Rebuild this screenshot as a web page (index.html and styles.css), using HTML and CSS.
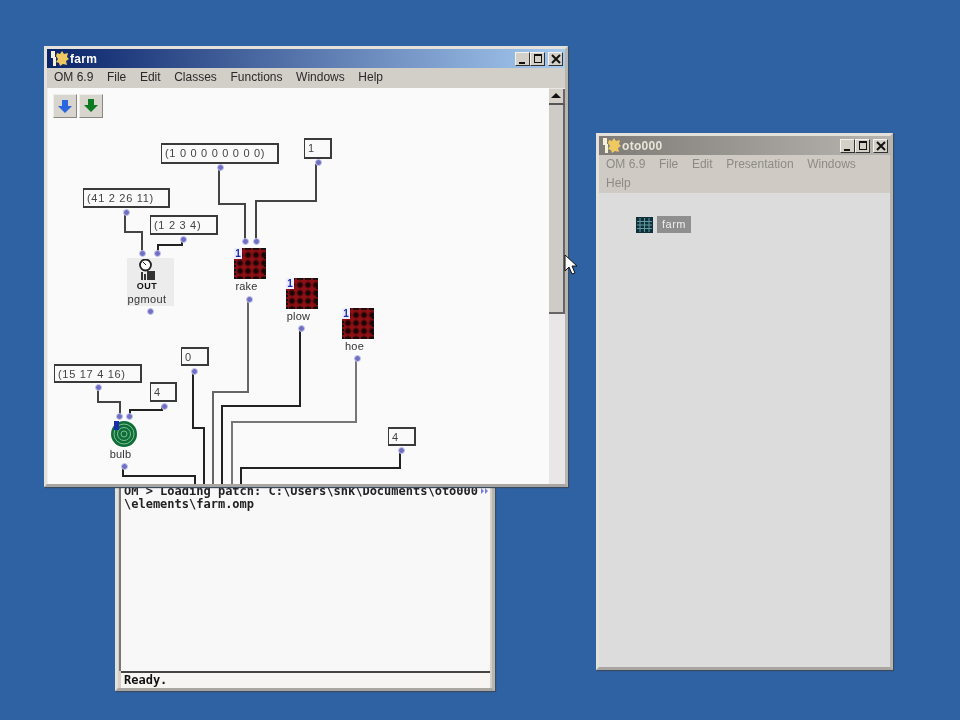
FILE: index.html
```html
<!DOCTYPE html>
<html lang="en">

<head>
  <meta charset="UTF-8">
  <title>farm</title>
  <link rel="stylesheet" href="styles.css">
</head>

<body>
  <div class="desktop">

    <!-- listener window, sits behind farm -->
    <div class="window listener">
      <div class="listener-text">
        <div class="listener-line">OM &gt; Loading patch: C:\Users\shk\Documents\oto000</div>
        <div class="listener-line">\elements\farm.omp</div>
        <svg class="more-mark" width="8" height="8" viewBox="0 0 8 8"><path d="M0 1l3 3-3 3zM4 1l3 3-3 3z" fill="#7a7ae0"/></svg>
      </div>
      <div class="status-bar">Ready.</div>
    </div>

    <!-- workspace window, inactive -->
    <div class="window workspace">
      <div class="titlebar inactive">
        <svg class="app-icon" width="20" height="17" viewBox="0 0 20 17">
          <path d="M2 1h4v6h1v9H4V8H2z" fill="#f6f0d8"/>
          <path d="M8 3l3 1 2-3 2 3 4-1-1 4 2 2-3 2 1 4-4-1-3 2-1-3-3-1 2-3-2-3z" fill="#f0c860"/>
        </svg>
        <span class="title-text">oto000</span>
        <div class="title-buttons">
          <div class="title-btn"><svg width="12" height="12" viewBox="0 0 12 12"><path d="M2 9h6v2H2z" fill="#111"/></svg></div>
          <div class="title-btn"><svg width="12" height="12" viewBox="0 0 12 12"><path d="M2 1h8v9H2zM3 3v6h6V3z" fill="#111" fill-rule="evenodd"/></svg></div>
          <div class="title-btn close"><svg width="12" height="12" viewBox="0 0 12 12"><path d="M2 2l8 8M10 2l-8 8" stroke="#111" stroke-width="2"/></svg></div>
        </div>
      </div>
      <div class="menubar">
        <span>OM 6.9</span><span>File</span><span>Edit</span><span>Presentation</span><span>Windows</span><span>Help</span>
      </div>
      <div class="workspace-body">
        <div class="file-item">
          <svg width="17" height="16" viewBox="0 0 17 16">
            <rect width="17" height="16" fill="#0f3038"/>
            <path d="M4 1v14M8.500 1v14M13 1v14M1 4.500h15M1 8h15M1 11.500h15" stroke="#5f9aa2" stroke-width="1"/>
          </svg>
          <span class="file-label">farm</span>
        </div>
      </div>
    </div>

    <!-- patch window, active -->
    <div class="window farm">
      <div class="titlebar">
        <svg class="app-icon" width="20" height="17" viewBox="0 0 20 17">
          <path d="M2 1h4v6h1v9H4V8H2z" fill="#f6f0d8"/>
          <path d="M8 3l3 1 2-3 2 3 4-1-1 4 2 2-3 2 1 4-4-1-3 2-1-3-3-1 2-3-2-3z" fill="#f0c860"/>
        </svg>
        <span class="title-text">farm</span>
        <div class="title-buttons">
          <div class="title-btn"><svg width="12" height="12" viewBox="0 0 12 12"><path d="M2 9h6v2H2z" fill="#111"/></svg></div>
          <div class="title-btn"><svg width="12" height="12" viewBox="0 0 12 12"><path d="M2 1h8v9H2zM3 3v6h6V3z" fill="#111" fill-rule="evenodd"/></svg></div>
          <div class="title-btn close"><svg width="12" height="12" viewBox="0 0 12 12"><path d="M2 2l8 8M10 2l-8 8" stroke="#111" stroke-width="2"/></svg></div>
        </div>
      </div>
      <div class="menubar">
        <span>OM 6.9</span><span>File</span><span>Edit</span><span>Classes</span><span>Functions</span><span>Windows</span><span>Help</span>
      </div>
      <div class="patch-area">
        <div class="canvas">
          <div class="tool-buttons">
            <div class="tool-btn"><svg width="18" height="18" viewBox="0 0 18 18"><path d="M6 3h6v6h4l-7 7-7-7h4z" fill="#2a66e0"/></svg></div>
            <div class="tool-btn"><svg width="18" height="18" viewBox="0 0 18 18"><path d="M6 2h6v6h4l-7 7-7-7h4z" fill="#0c7a1e"/></svg></div>
          </div>

          <svg class="wires" width="501" height="396" viewBox="48 88 501 396">
            <g fill="none" stroke="#444" stroke-width="2">
              <path d="M219 168V204H245V240"/>
              <path d="M316 164V201H256V240"/>
              <path d="M125 212V232H142V252"/>
              <path d="M182 239V245H158V252" stroke="#222"/>
              <path d="M98 387V402H120V416"/>
              <path d="M162 406V410H130V416" stroke="#222"/>
              <path d="M193 371V428H204V484" stroke="#222"/>
              <path d="M248 299V392H213V484" stroke="#666"/>
              <path d="M300 328V406H222V484" stroke="#222"/>
              <path d="M356 358V422H232V484" stroke="#777"/>
              <path d="M400 450V468H241V484" stroke="#222"/>
              <path d="M123 466V476H195V484" stroke="#222"/>
            </g>
          </svg>

          <div class="value-box box-a">(1 0 0 0 0 0 0 0 0)</div>
          <div class="value-box box-b">1</div>
          <div class="value-box box-c">(41 2 26 11)</div>
          <div class="value-box box-d">(1 2 3 4)</div>
          <div class="value-box box-e">(15 17 4 16)</div>
          <div class="value-box box-f">4</div>
          <div class="value-box box-g">0</div>
          <div class="value-box box-h">4</div>

          <div class="port p1"></div>
          <div class="port p2"></div>
          <div class="port p3"></div>
          <div class="port p4"></div>
          <div class="port p5"></div>
          <div class="port p6"></div>
          <div class="port p7"></div>
          <div class="port p8"></div>
          <div class="port p9"></div>
          <div class="port p10"></div>
          <div class="port p11"></div>
          <div class="port p12"></div>
          <div class="port p13"></div>
          <div class="port p14"></div>
          <div class="port p15"></div>
          <div class="port p16"></div>
          <div class="port p17"></div>
          <div class="port p18"></div>
          <div class="port p19"></div>

          <div class="box-node pgmout">
            <svg width="30" height="34" viewBox="0 0 30 34">
              <circle cx="13.500" cy="6" r="5.500" fill="#fff" stroke="#222" stroke-width="1.800"/>
              <path d="M11 3l3 3" stroke="#222"/>
              <path d="M9 13h2v8H9zM12 15h2v6h-2zM15 12h8v9h-8z" fill="#333"/>
              <text class="out-text" x="15" y="30" text-anchor="middle">OUT</text>
            </svg>
            <span>pgmout</span>
          </div>

          <div class="box-node rake">
            <div class="chip"><span class="chip-num">1</span></div>
            <span>rake</span>
          </div>
          <div class="box-node plow">
            <div class="chip"><span class="chip-num">1</span></div>
            <span>plow</span>
          </div>
          <div class="box-node hoe">
            <div class="chip"><span class="chip-num">1</span></div>
            <span>hoe</span>
          </div>

          <div class="box-node bulb">
            <svg width="26" height="26" viewBox="0 0 26 26">
              <circle cx="13" cy="13" r="13" fill="#0f6e38"/>
              <g fill="none" stroke="#7cc090" stroke-width="1">
                <circle cx="13" cy="13" r="10"/>
                <circle cx="13" cy="13" r="6.500"/>
                <circle cx="13" cy="13" r="3"/>
              </g>
              <rect x="3" y="0" width="5" height="9" fill="#1a2cb0"/>
            </svg>
            <span>bulb</span>
          </div>
        </div>

        <div class="scrollbar">
          <div class="scroll-arrow"><svg width="10" height="6" viewBox="0 0 10 6"><path d="M5 0l5 5H0z" fill="#111"/></svg></div>
          <div class="scroll-thumb"></div>
        </div>
      </div>
    </div>

    <svg class="cursor" width="14" height="22" viewBox="0 0 14 22">
      <path d="M1 1v16l4-4 3 7 3-1-3-7h5z" fill="#fff" stroke="#111" stroke-width="1"/>
    </svg>
  </div>
</body>

</html>
```

FILE: styles.css
```css
html,
body {
  margin: 0;
  height: 100%;
  overflow: hidden;
}

.desktop {
  position: relative;
  width: 960px;
  height: 720px;
  background-color: #2f62a3;
  font-family: "Liberation Sans", sans-serif;
  font-size: 12px;
  color: #222;
  filter: blur(0.5px);
}

/* windows */
.window {
  position: absolute;
  box-sizing: border-box;
  display: flex;
  flex-direction: column;
  background-color: #d4d0c8;
  border: 3px solid #e4e1db;
  border-right-color: #b8b5af;
  border-bottom-color: #a9a6a1;
  box-shadow: 1px 1px 1px #3a4a60;
}

.farm {
  left: 44px;
  top: 46px;
  width: 524px;
  height: 441px;
}

.listener {
  left: 115px;
  top: 470px;
  width: 380px;
  height: 221px;
  padding: 0 2px 0 1px;
}

.workspace {
  left: 596px;
  top: 133px;
  width: 297px;
  height: 537px;
  background-color: #d4d0cb;
}

.titlebar {
  flex: none;
  display: flex;
  align-items: center;
  height: 19px;
  padding: 0 2px;
  background: linear-gradient(to right, #0a246a, #a6caf0);
  color: #fff;
  font-weight: bold;
}

.titlebar.inactive {
  background: linear-gradient(to right, #7f7c78, #b8b5b0);
  color: #e8e4d8;
}

.app-icon {
  flex: none;
}

.title-text {
  margin-left: 1px;
  letter-spacing: 0.3px;
}

.title-buttons {
  margin-left: auto;
  display: flex;
}

.title-btn {
  width: 15px;
  height: 14px;
  display: flex;
  align-items: center;
  justify-content: center;
  background-color: #d4d0c8;
  border: 1px solid;
  border-color: #f4f2ee #333 #333 #f4f2ee;
  box-sizing: border-box;
}

.title-btn.close {
  margin-left: 3px;
}

.menubar {
  flex: none;
  display: flex;
  flex-wrap: wrap;
  height: 20px;
  align-items: center;
  gap: 0 13.6px;
  padding: 0 7px 2px;
  box-sizing: border-box;
  color: #2a2a2a;
  background-color: #d2cec8;
}

.workspace .menubar {
  height: 38px;
  align-content: flex-start;
  gap: 5px 13.6px;
  padding: 2px 7px 0;
  line-height: 14px;
  color: #8d8a86;
  background-color: #d0cac5;
}

.workspace-body {
  flex: 1;
  background-color: #dcdcdc;
  padding-top: 23px;
}

.file-item {
  display: flex;
  align-items: center;
  gap: 4px;
  margin-left: 37px;
}

.file-label {
  width: 34px;
  height: 17px;
  line-height: 17px;
  background-color: #8f8f8f;
  color: #eee;
  font-size: 11px;
  letter-spacing: 0.5px;
  text-align: center;
}

/* listener */
.listener-text {
  position: relative;
  flex: 1;
  padding: 12px 0 0 3px;
  background-color: #f8f8f8;
  border-left: 2px solid #777;
  font-family: "DejaVu Sans Mono", monospace;
  font-size: 12px;
  font-weight: bold;
  line-height: 13px;
  color: #222;
}

.more-mark {
  position: absolute;
  top: 14px;
  right: 1px;
}

.status-bar {
  flex: none;
  height: 17px;
  box-sizing: border-box;
  margin-left: 2px;
  line-height: 15px;
  padding-left: 3px;
  background-color: #f6f5f2;
  border-top: 2px solid #444;
  font-family: "DejaVu Sans Mono", monospace;
  font-weight: bold;
  color: #111;
}

/* patch */
.patch-area {
  flex: 1;
  display: flex;
  min-height: 0;
  background-color: #fafafa;
  border-left: 1px solid #eee;
}

.canvas {
  position: relative;
  flex: 1;
  overflow: hidden;
}

.tool-buttons {
  display: flex;
  gap: 2px;
  padding: 6px 0 0 5px;
}

.tool-btn {
  width: 24px;
  height: 24px;
  display: flex;
  align-items: center;
  justify-content: center;
  background-color: #d8d5cf;
  border: 1px solid;
  border-color: #f0eeea #8a8782 #8a8782 #f0eeea;
  box-sizing: border-box;
}

.wires {
  position: absolute;
  left: 0;
  top: 0;
}

.value-box {
  position: absolute;
  box-sizing: border-box;
  padding: 0 3px;
  background-color: #fafafa;
  border: 2px solid #3a3a3a;
  border-left-width: 1px;
  font-size: 11px;
  line-height: 16px;
  letter-spacing: 0.7px;
  color: #444;
  white-space: nowrap;
}

.box-a { left: 113px; top: 55px; width: 118px; height: 21px; }
.box-b { left: 256px; top: 50px; width: 28px; height: 21px; }
.box-c { left: 35px; top: 100px; width: 87px; height: 20px; }
.box-d { left: 102px; top: 127px; width: 68px; height: 20px; }
.box-e { left: 6px; top: 276px; width: 88px; height: 19px; }
.box-f { left: 102px; top: 294px; width: 27px; height: 20px; }
.box-g { left: 133px; top: 259px; width: 28px; height: 19px; }
.box-h { left: 340px; top: 339px; width: 28px; height: 19px; }

.port {
  position: absolute;
  width: 5px;
  height: 5px;
  border-radius: 50%;
  background-color: #6f70c4;
  border: 1px solid #c8c8ea;
}

.p1 { left: 169px; top: 76px; }
.p2 { left: 267px; top: 71px; }
.p3 { left: 75px; top: 121px; }
.p4 { left: 132px; top: 148px; }
.p5 { left: 91px; top: 162px; }
.p6 { left: 106px; top: 162px; }
.p7 { left: 194px; top: 150px; }
.p8 { left: 205px; top: 150px; }
.p9 { left: 99px; top: 220px; }
.p10 { left: 198px; top: 208px; }
.p11 { left: 250px; top: 237px; }
.p12 { left: 306px; top: 267px; }
.p13 { left: 143px; top: 280px; }
.p14 { left: 47px; top: 296px; }
.p15 { left: 113px; top: 315px; }
.p16 { left: 68px; top: 325px; }
.p17 { left: 78px; top: 325px; }
.p18 { left: 73px; top: 375px; }
.p19 { left: 350px; top: 359px; }

.box-node {
  position: absolute;
  display: flex;
  flex-direction: column;
  align-items: center;
  font-size: 11px;
  line-height: 13px;
  letter-spacing: 0.2px;
  color: #333;
}

.box-node span:not(.chip-num) {
  margin-right: 7px;
}

.pgmout {
  left: 79px;
  top: 170px;
  box-sizing: border-box;
  width: 47px;
  height: 48px;
  padding-top: 1px;
  background-color: #ececec;
  letter-spacing: 0.4px;
}

.pgmout svg {
  margin-right: 8px;
}

.out-text {
  font-family: "Liberation Sans", sans-serif;
  font-size: 9px;
  font-weight: bold;
  letter-spacing: 0.5px;
  fill: #111;
}

.rake { left: 186px; top: 160px; width: 32px; }
.plow { left: 238px; top: 190px; width: 32px; }
.hoe { left: 294px; top: 220px; width: 32px; }

.bulb {
  left: 63px;
  top: 333px;
  width: 26px;
}

.bulb span {
  margin: 1px 5px 0 0;
}

.chip {
  position: relative;
  box-sizing: border-box;
  width: 32px;
  height: 31px;
  margin-bottom: 1px;
  background-color: #8e0f14;
  background-image:
    radial-gradient(circle, #1a0506 0, #1a0506 1.500px, transparent 4px);
  background-size: 8px 8px;
  background-position: 0 1px;
  border: 2px dotted #111;
}

.chip-num {
  position: absolute;
  left: -2px;
  top: -2px;
  width: 8px;
  height: 11px;
  background-color: #eef;
  color: #1a2cb0;
  font-size: 10px;
  font-weight: bold;
  line-height: 11px;
  letter-spacing: 0;
  text-align: center;
}

.scrollbar {
  flex: none;
  display: flex;
  flex-direction: column;
  width: 16px;
  padding-top: 1px;
  box-sizing: border-box;
  background-color: #e8e6e6;
}

.scroll-arrow {
  flex: none;
  height: 16px;
  display: flex;
  align-items: center;
  justify-content: center;
  background-color: #d4d0c8;
  border-bottom: 2px solid #555;
  border-right: 2px solid #666;
  box-sizing: border-box;
}

.scroll-thumb {
  flex: none;
  height: 209px;
  box-sizing: border-box;
  background-color: #cfcbc6;
  border-right: 2px solid #666;
  border-bottom: 2px solid #666;
}

.cursor {
  position: absolute;
  left: 564px;
  top: 254px;
}
```
